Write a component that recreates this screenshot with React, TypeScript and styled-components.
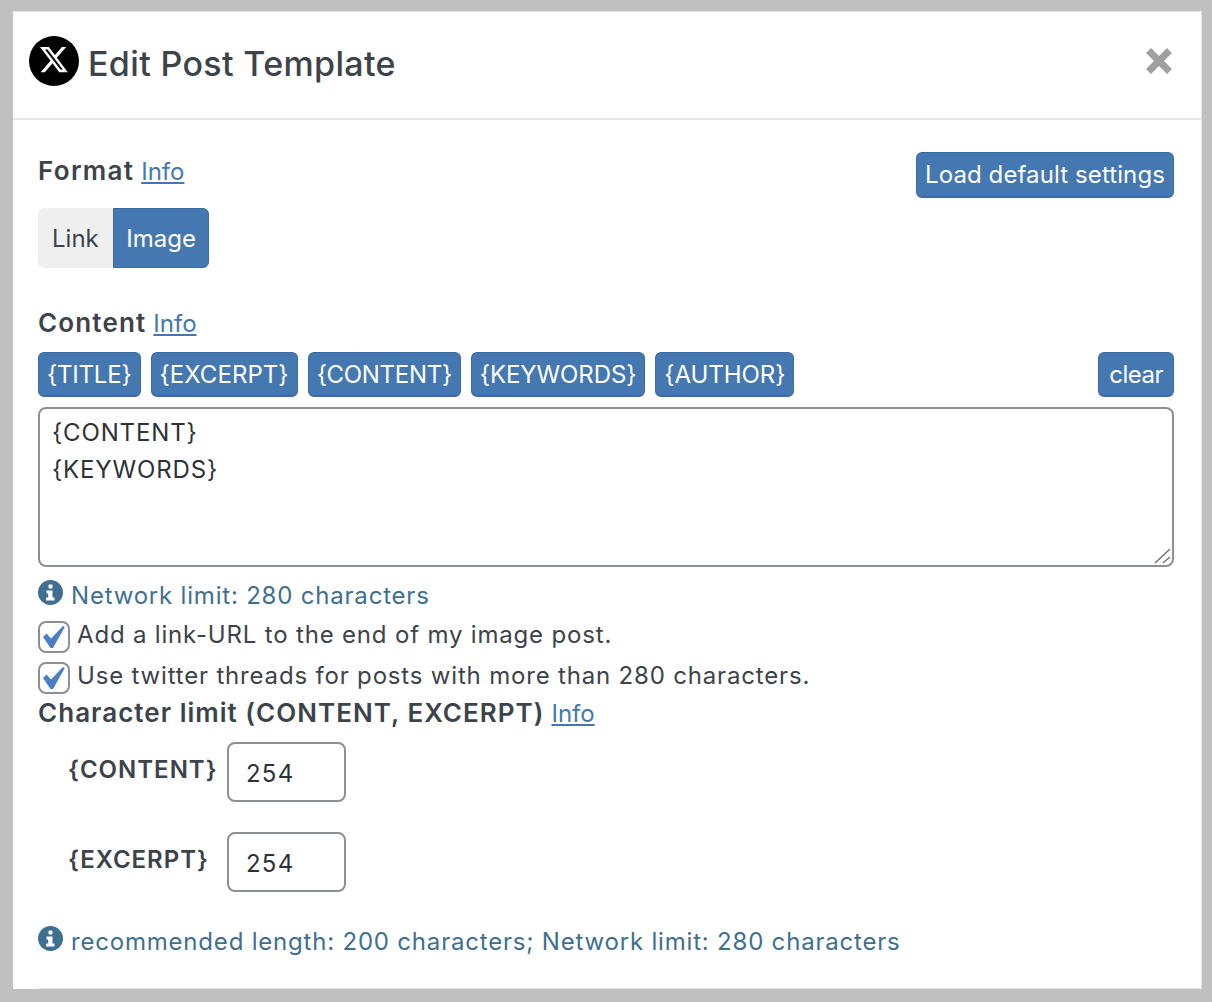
import React from "react";
import styled, { createGlobalStyle } from "styled-components";

const Global = createGlobalStyle`
  html, body { margin: 0; padding: 0; background: #c0c0c0; }
  body { font-family: Inter, "Liberation Sans", sans-serif; color: #3c434a; }
`;

const Page = styled.div`
  height: 1002px;
  padding: 11px 10px 0 13px;
  box-sizing: border-box;
  overflow: hidden;
`;

const Modal = styled.div`
  background: #fff;
  height: 978px;
  border-top: 1px solid #e4e4e4;
  border-right: 1px solid #e4e4e4;
  box-sizing: border-box;
  display: flex;
  flex-direction: column;
`;

const Header = styled.header`
  height: 108px;
  flex: none;
  box-sizing: border-box;
  border-bottom: 2px solid #e6e6e6;
  display: flex;
  align-items: flex-start;
  padding: 24px 29px 0 16px;
`;

const Logo = styled.svg`
  width: 50px;
  height: 50px;
  flex: none;
`;

const Title = styled.h1`
  margin: 0 0 0 9px;
  font-size: 34px;
  line-height: 56px;
  font-weight: 500;
  letter-spacing: 0.35px;
  color: #3c434a;
  flex: 1;
`;

const Close = styled.svg`
  width: 26px;
  height: 26px;
  margin-top: 12px;
  flex: none;
`;

const Body = styled.div`
  padding: 32px 27px 0 25px;
  display: flex;
  flex-direction: column;
  flex: 1;
`;

const TopRow = styled.div`
  display: flex;
  justify-content: space-between;
  align-items: flex-start;
`;

const Heading = styled.div<{ $spacing: number; $top?: number }>`
  font-size: 26px;
  line-height: 38px;
  font-weight: 600;
  letter-spacing: ${(p) => p.$spacing}px;
  margin-top: ${(p) => p.$top ?? 0}px;
  color: #3c434a;
  display: flex;
  align-items: baseline;
  gap: 7px;
`;

const InfoLink = styled.a`
  font-size: 24px;
  font-weight: 400;
  letter-spacing: 0;
  color: #4477b0;
  text-decoration: underline;
`;

const Button = styled.button<{ $spacing?: number; $height?: number; $pad?: number }>`
  height: ${(p) => p.$height ?? 46}px;
  padding: 0 ${(p) => p.$pad ?? 8}px;
  box-sizing: border-box;
  background: #4577b1;
  border: 1px solid #3a6ca3;
  border-bottom-width: 2px;
  border-radius: 6px;
  color: #fff;
  font-family: inherit;
  font-size: 24px;
  letter-spacing: ${(p) => p.$spacing ?? 0}px;
  white-space: nowrap;
`;

const Segments = styled.div`
  display: flex;
  margin-top: 10px;
`;

const Segment = styled.div<{ $active?: boolean }>`
  height: 60px;
  display: flex;
  align-items: center;
  font-size: 24px;
  padding: 0 ${(p) => (p.$active ? 12.5 : 13)}px;
  box-sizing: border-box;
  background: ${(p) => (p.$active ? "#4577b1" : "#efefef")};
  color: ${(p) => (p.$active ? "#fff" : "#3c434a")};
  border: 1px solid ${(p) => (p.$active ? "#3a6ca3" : "#efefef")};
  border-radius: ${(p) => (p.$active ? "0 6px 6px 0" : "6px 0 0 6px")};
`;

const ContentHeading = styled.div`
  margin-top: 36px;
`;

const TagRow = styled.div`
  display: flex;
  gap: 10px;
  margin-top: 9px;
`;

const ClearButton = styled(Button)`
  margin-left: auto;
`;

const TextBox = styled.div`
  margin-top: 10px;
  height: 160px;
  box-sizing: border-box;
  border: 2px solid #8c8f94;
  border-radius: 8px;
  padding: 5px 12px;
  font-size: 24px;
  line-height: 37px;
  letter-spacing: 0.85px;
  color: #2c3338;
  position: relative;
`;

const Grip = styled.svg`
  position: absolute;
  right: 1px;
  bottom: 1px;
  width: 18px;
  height: 18px;
`;

const Note = styled.div<{ $top: number }>`
  display: flex;
  align-items: center;
  gap: 8px;
  margin-top: ${(p) => p.$top}px;
  font-size: 24px;
  line-height: 38px;
  letter-spacing: 0.8px;
  color: #3e6f8f;
`;

const InfoIcon = styled.svg`
  width: 25px;
  height: 25px;
  flex: none;
  margin-top: -8px;
`;

const CheckRow = styled.div<{ $top: number }>`
  display: flex;
  align-items: center;
  gap: 7px;
  height: 40px;
  margin-top: ${(p) => p.$top}px;
  font-size: 24px;
  letter-spacing: 0.82px;
  color: #3c434a;
`;

const CheckBox = styled.span`
  width: 32px;
  height: 32px;
  box-sizing: border-box;
  border: 2px solid #8c8f94;
  border-radius: 8px;
  flex: none;
  margin-top: 5px;
  display: flex;
`;

const LimitRow = styled.div<{ $top: number }>`
  display: flex;
  align-items: flex-start;
  margin-top: ${(p) => p.$top}px;
  padding-left: 30px;
`;

const LimitLabel = styled.div`
  width: 159px;
  font-size: 24px;
  line-height: 36px;
  font-weight: 600;
  letter-spacing: 1px;
  color: #3c434a;
  margin-top: 10px;
`;

const NumberBox = styled.div`
  width: 119px;
  height: 60px;
  box-sizing: border-box;
  border: 2px solid #8c8f94;
  border-radius: 8px;
  padding: 0 17px;
  font-size: 24px;
  letter-spacing: 1.2px;
  line-height: 60px;
  color: #2c3338;
`;

const BottomRule = styled.div`
  margin-left: 25px;
  height: 1px;
  background: #e4e4e4;
  flex: none;
`;

const Info = () => (
  <InfoIcon viewBox="0 0 25 25">
    <circle cx="12.5" cy="12.5" r="12.5" fill="#3e6f8f" />
    <rect x="10.5" y="4.5" width="4" height="4" rx="1" fill="#fff" />
    <path d="M8.500 10.500h6v7h2v3h-8.500v-3h2.200v-4h-1.700z" fill="#fff" />
  </InfoIcon>
);

const Check = () => (
  <svg width="28" height="28" viewBox="0 0 28 28">
    <path d="M3 14l3.500-3.500 4.500 5L23 3l1.800 1L13 25h-2.500z" fill="#4a7fc4" />
  </svg>
);

const tags = [
  { label: "{TITLE}", spacing: -0.2 },
  { label: "{EXCERPT}", spacing: 0.05 },
  { label: "{CONTENT}", spacing: -0.3 },
  { label: "{KEYWORDS}", spacing: -0.1 },
  { label: "{AUTHOR}", spacing: -0.05 },
];

export default function App() {
  return (
    <>
      <Global />
      <Page>
        <Modal>
          <Header>
            <Logo viewBox="0 0 50 50">
              <circle cx="25" cy="25" r="25" fill="#000" />
              <g transform="translate(9.400 8.100) scale(1.290)">
                <path
                  d="M18.244 2.250h3.308l-7.227 8.260 8.502 11.240H16.170l-5.214-6.817L4.990 21.750H1.680l7.730-8.835L1.254 2.250H8.080l4.713 6.231zm-1.161 17.520h1.833L7.084 4.126H5.117z"
                  fill="#fff"
                />
              </g>
            </Logo>
            <Title>Edit Post Template</Title>
            <Close viewBox="0 0 26 26">
              <path d="M5 0l8 8 8-8 5 5-8 8 8 8-5 5-8-8-8 8-5-5 8-8-8-8z" fill="#a0a0a0" />
            </Close>
          </Header>
          <Body>
            <TopRow>
              <Heading $spacing={1.3}>
                Format <InfoLink>Info</InfoLink>
              </Heading>
              <Button $spacing={0.1}>Load default settings</Button>
            </TopRow>
            <Segments>
              <Segment>Link</Segment>
              <Segment $active>Image</Segment>
            </Segments>
            <ContentHeading>
              <Heading $spacing={1.15}>
                Content <InfoLink>Info</InfoLink>
              </Heading>
            </ContentHeading>
            <TagRow>
              {tags.map((t) => (
                <Button key={t.label} $spacing={t.spacing} $height={45}>
                  {t.label}
                </Button>
              ))}
              <ClearButton $spacing={-0.5} $height={45} $pad={10}>
                clear
              </ClearButton>
            </TagRow>
            <TextBox>
              {"{CONTENT}"}
              <br />
              {"{KEYWORDS}"}
              <Grip viewBox="0 0 18 18">
                <path d="M2 17L17 3M10 17l7-6" stroke="#666" strokeWidth="1.200" fill="none" />
              </Grip>
            </TextBox>
            <Note $top={10}>
              <Info />
              Network limit: 280 characters
            </Note>
            <CheckRow $top={-1}>
              <CheckBox>
                <Check />
              </CheckBox>
              Add a link-URL to the end of my image post.
            </CheckRow>
            <CheckRow $top={1}>
              <CheckBox>
                <Check />
              </CheckBox>
              Use twitter threads for posts with more than 280 characters.
            </CheckRow>
            <Heading $spacing={1.03} $top={-1}>
              Character limit (CONTENT, EXCERPT) <InfoLink>Info</InfoLink>
            </Heading>
            <LimitRow $top={9}>
              <LimitLabel>{"{CONTENT}"}</LimitLabel>
              <NumberBox>254</NumberBox>
            </LimitRow>
            <LimitRow $top={30}>
              <LimitLabel>{"{EXCERPT}"}</LimitLabel>
              <NumberBox>254</NumberBox>
            </LimitRow>
            <Note $top={31}>
              <Info />
              recommended length: 200 characters; Network limit: 280 characters
            </Note>
          </Body>
          <BottomRule />
        </Modal>
      </Page>
    </>
  );
}
